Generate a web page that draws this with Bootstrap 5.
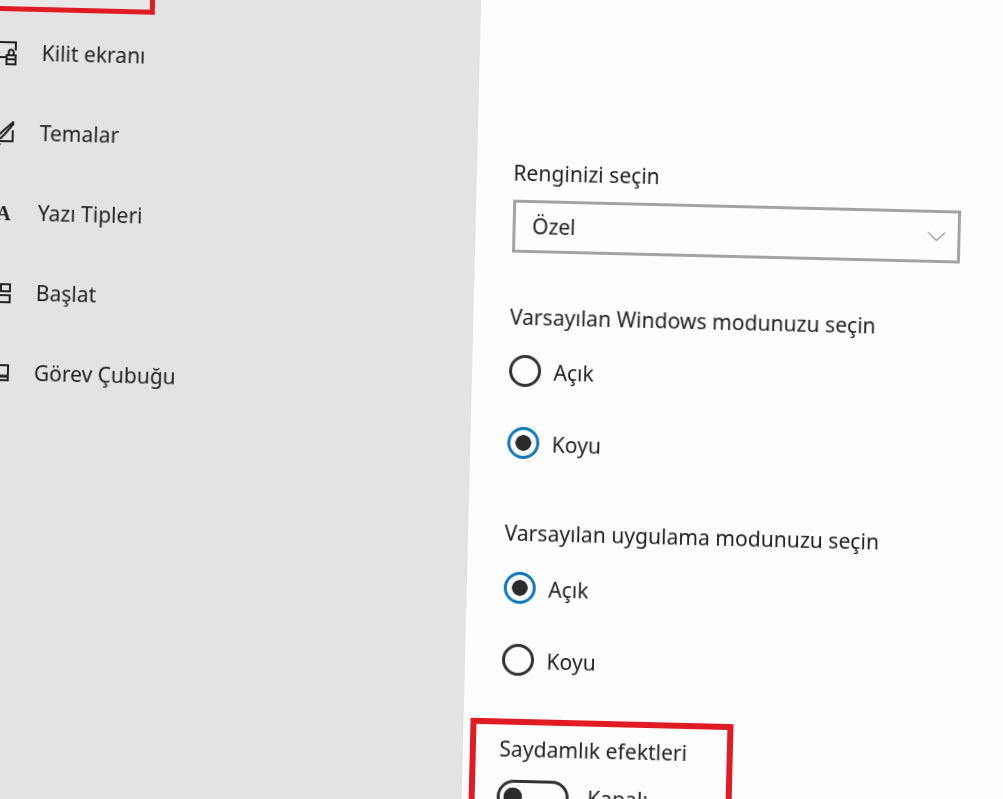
<!DOCTYPE html>
<html lang="tr">
  <head>
    <meta charset="UTF-8" />
    <meta name="viewport" content="width=device-width, initial-scale=1.0" />
    <title>Renkler</title>
    <link
      href="https://cdn.jsdelivr.net/npm/bootstrap@5.3.3/dist/css/bootstrap.min.css"
      rel="stylesheet"
    />
    <style>
      html, body { height: 100%; overflow: hidden; background: #fdfdfd; }
      body { font-family: "Noto Sans", "Open Sans", sans-serif; font-size: 21.1px; color: #222; }
      /* the photo is tilted, the whole settings window turns with it */
      .stage {
        width: 1180px; height: 1000px;
        margin: -60px 0 0 -60px;
        transform-origin: 60px 60px;
        transform: rotate(1.4deg);
        filter: blur(0.35px);
      }
      .side-pane { width: 540.5px; background: #e3e3e3; flex-shrink: 0; }
      .selected-box { width: 215px; height: 71px; border: 5px solid #e01b24; margin-bottom: 2px; background: #e9e9e9; }
      .side-row { height: 80px; padding-left: 54px; gap: 25px; font-size: 21px; }
      .side-icon { width: 24px; height: 24px; flex-shrink: 0; }
      .side-icon svg { display: block; }
      .glyph-a { font-family: "Liberation Serif", serif; font-weight: 700; font-size: 20px; line-height: 24px; text-align: right; padding-right: 2px; }
      .main-pane { padding: 207px 0 0 37px; }
      .opt-label { line-height: 26px; white-space: nowrap; }
      .color-select {
        width: 448px; height: 53px; margin-top: 14px; padding: 0 40px 0 17px;
        border: 3px solid #a3a3a3; border-radius: 0;
        font-size: 21px; color: #222; background-color: #fdfdfd;
        background-image: url("data:image/svg+xml,%3csvg xmlns='http://www.w3.org/2000/svg' viewBox='0 0 18 9'%3e%3cpath fill='none' stroke='%23555' d='M.5.5l8.5 8 8.5-8'/%3e%3c/svg%3e");
        background-size: 18px 9px; background-position: right 12px center;
      }
      .radio-row { height: 32px; margin: 0; padding: 0; gap: 13px; }
      .radio-row .form-check-input {
        width: 32px; height: 32px; margin: 0; float: none; flex-shrink: 0;
        border: 3px solid #333; background: #fdfdfd;
      }
      .radio-row .form-check-input:checked {
        border-color: #0f78b8;
        background: radial-gradient(circle, #2b2b2b 0 7.500px, #fdfdfd 8.100px);
      }
      .radio-row .form-check-label { opacity: 1; padding-top: 2px; }
      .gap-a { margin-top: 51px; }
      .gap-b { margin-top: 25px; }
      .gap-c { margin-top: 40px; }
      .gap-d { margin-top: 61px; }
      .gap-e { margin-top: 26px; }
      .effect-box { width: 263px; height: 200px; margin: 43px 0 0 -30px; padding: 11px 0 0 24px; border: 6px solid #e01b24; }
      .switch-row { margin: 18px 0 0 -2px; padding: 0; gap: 19px; }
      .switch-row .form-check-input {
        width: 72px; height: 34px; margin: 0; float: none; flex-shrink: 0;
        border: 3px solid #333; border-radius: 17px;
        background: #fdfdfd radial-gradient(circle at 13px 14px, #2b2b2b 0 9px, #fdfdfd 9.6px);
      }
    </style>
  </head>

  <body>
    <div class="stage d-flex">
      <div class="side-pane">
        <div class="selected-box"></div>
        <div class="side-row d-flex align-items-center">
          <div class="side-icon">
            <svg width="24" height="24" viewBox="0 0 24 24" fill="none" stroke="#222" stroke-width="2">
              <path d="M0 1H23V9M0 16H13" />
              <rect x="14" y="14" width="9" height="9" />
              <path d="M16 14V11a2.500 2.500 0 0 1 5 0V14" />
              <path d="M14 18H23" />
            </svg>
          </div>
          <span>Kilit ekranı</span>
        </div>
        <div class="side-row d-flex align-items-center">
          <div class="side-icon">
            <svg width="24" height="24" viewBox="0 0 24 24" fill="none" stroke="#222" stroke-width="2">
              <path d="M23 0L12 10 8 14 6 18 10 17 14 13 23 2" />
              <path d="M0 20H22V9M0 23H10" />
            </svg>
          </div>
          <span>Temalar</span>
        </div>
        <div class="side-row d-flex align-items-center">
          <div class="side-icon glyph-a">A</div>
          <span>Yazı Tipleri</span>
        </div>
        <div class="side-row d-flex align-items-center">
          <div class="side-icon">
            <svg width="24" height="24" viewBox="0 0 24 24" fill="none" stroke="#222" stroke-width="2">
              <rect x="2" y="3" width="8" height="7" />
              <rect x="14" y="3" width="9" height="7" />
              <rect x="2" y="14" width="21" height="7" />
            </svg>
          </div>
          <span>Başlat</span>
        </div>
        <div class="side-row d-flex align-items-center">
          <div class="side-icon">
            <svg width="24" height="24" viewBox="0 0 24 24" fill="none" stroke="#222" stroke-width="2">
              <rect x="1" y="4" width="22" height="15" />
              <path d="M1 15H23" stroke-width="3" />
            </svg>
          </div>
          <span>Görev Çubuğu</span>
        </div>
      </div>

      <div class="main-pane flex-grow-1">
        <div class="opt-label">Renginizi seçin</div>
        <select class="form-select color-select">
          <option>Özel</option>
        </select>

        <div class="opt-label gap-a">Varsayılan Windows modunuzu seçin</div>
        <div class="form-check radio-row d-flex align-items-center gap-b">
          <input class="form-check-input" type="radio" name="winMode" id="winLight" />
          <label class="form-check-label" for="winLight">Açık</label>
        </div>
        <div class="form-check radio-row d-flex align-items-center gap-c">
          <input class="form-check-input" type="radio" name="winMode" id="winDark" checked />
          <label class="form-check-label" for="winDark">Koyu</label>
        </div>

        <div class="opt-label gap-d">Varsayılan uygulama modunuzu seçin</div>
        <div class="form-check radio-row d-flex align-items-center gap-e">
          <input class="form-check-input" type="radio" name="appMode" id="appLight" checked />
          <label class="form-check-label" for="appLight">Açık</label>
        </div>
        <div class="form-check radio-row d-flex align-items-center gap-c">
          <input class="form-check-input" type="radio" name="appMode" id="appDark" />
          <label class="form-check-label" for="appDark">Koyu</label>
        </div>

        <div class="effect-box">
          <div class="opt-label">Saydamlık efektleri</div>
          <div class="form-check form-switch switch-row d-flex align-items-center">
            <input class="form-check-input" type="checkbox" role="switch" id="effects" />
            <label class="form-check-label" for="effects">Kapalı</label>
          </div>
        </div>
      </div>
    </div>

    <script src="https://cdn.jsdelivr.net/npm/bootstrap@5.3.3/dist/js/bootstrap.bundle.min.js"></script>
  </body>
</html>
